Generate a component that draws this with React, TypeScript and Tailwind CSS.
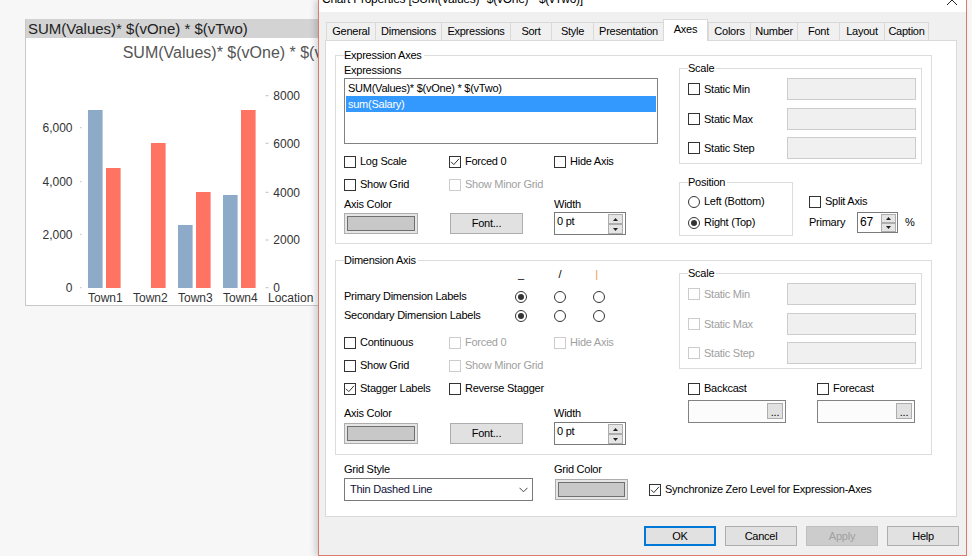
import React from "react";

const tabs = [
  { name: "General", w: "w-[49px]" },
  { name: "Dimensions", w: "w-[66px]" },
  { name: "Expressions", w: "w-[69px]" },
  { name: "Sort", w: "w-[41px]" },
  { name: "Style", w: "w-[42px]" },
  { name: "Presentation", w: "w-[70px]" },
  { name: "Axes", w: "w-[45px]", active: true },
  { name: "Colors", w: "w-[42px]" },
  { name: "Number", w: "w-[47px]" },
  { name: "Font", w: "w-[42px]" },
  { name: "Layout", w: "w-[45px]" },
  { name: "Caption", w: "w-[45px]", last: true },
];

function Box({ checked = false, disabled = false }: { checked?: boolean; disabled?: boolean }) {
  return (
    <span
      className={`w-[12px] h-[12px] shrink-0 border bg-white flex items-center justify-center ${
        disabled ? "border-[#cccccc]" : "border-[#333333]"
      }`}
    >
      {checked && (
        <svg width="10" height="10" viewBox="0 0 10 10">
          <path d="M1 4.8 L3.8 7.6 L9 1.8" fill="none" stroke="#333" strokeWidth="1" />
        </svg>
      )}
    </span>
  );
}

function Check({
  label,
  checked = false,
  disabled = false,
  className = "",
}: {
  label: string;
  checked?: boolean;
  disabled?: boolean;
  className?: string;
}) {
  return (
    <div className={`flex items-center h-[13px] ${className}`}>
      <Box checked={checked} disabled={disabled} />
      <span className={`ml-[4px] whitespace-nowrap ${disabled ? "text-[#a0a0a0]" : "text-black"}`}>{label}</span>
    </div>
  );
}

function Dot({ checked = false, className = "" }: { checked?: boolean; className?: string }) {
  return (
    <span
      className={`w-[12px] h-[12px] shrink-0 rounded-full border border-[#333333] bg-white flex items-center justify-center ${className}`}
    >
      {checked && <span className="w-[6px] h-[6px] rounded-full bg-[#333333]" />}
    </span>
  );
}

function Radio({ label, checked = false, className = "" }: { label: string; checked?: boolean; className?: string }) {
  return (
    <div className={`flex items-center h-[13px] ${className}`}>
      <Dot checked={checked} />
      <span className="ml-[4px] whitespace-nowrap">{label}</span>
    </div>
  );
}

function Group({ title, className = "", children }: { title: string; className?: string; children: React.ReactNode }) {
  return (
    <fieldset className={`border border-[#dcdcdc] ${className}`}>
      <legend className="pr-[2px] leading-[13px]">{title}</legend>
      {children}
    </fieldset>
  );
}

function Swatch({ className = "" }: { className?: string }) {
  return (
    <div className={`border border-[#adadad] bg-[#e5e5e5] p-[2px] ${className}`}>
      <div className="h-full border border-[#707070] bg-[#c8c8c8]" />
    </div>
  );
}

function Spinner() {
  return (
    <div className="flex flex-col mt-[1px] mr-[2px] ml-auto">
      <div className="w-[15px] h-[10px] border border-[#adadad] bg-[#e5e5e5] flex items-center justify-center">
        <svg width="5" height="3" viewBox="0 0 5 3">
          <path d="M0 3 L2.5 0 L5 3 Z" fill="#222" />
        </svg>
      </div>
      <div className="w-[15px] h-[10px] border border-[#adadad] bg-[#e5e5e5] flex items-center justify-center">
        <svg width="5" height="3" viewBox="0 0 5 3">
          <path d="M0 0 L2.5 3 L5 0 Z" fill="#222" />
        </svg>
      </div>
    </div>
  );
}

function WidthRow() {
  return (
    <div className="flex items-center h-[23px]">
      <Swatch className="w-[74px] h-[21px]" />
      <div className="ml-[32px] w-[73px] h-[21px] border border-[#adadad] bg-[#e1e1e1] flex items-center justify-center">
        Font...
      </div>
      <div className="ml-[31px] w-[72px] h-[23px] border border-[#7a7a7a] bg-white flex items-start">
        <span className="pl-[2px] pt-[2px]">0 pt</span>
        <Spinner />
      </div>
    </div>
  );
}

function ScaleGroup({ disabled = false }: { disabled?: boolean }) {
  return (
    <Group title="Scale" className="w-[243px] pl-[8px] pb-[4px]">
      <div className="mt-[3px] flex items-center h-[22px]">
        <Check label="Static Min" disabled={disabled} className="w-[99px]" />
        <div className="w-[129px] h-[22px] border border-[#cccccc] bg-[#f0f0f0]" />
      </div>
      <div className="mt-[8px] flex items-center h-[22px]">
        <Check label="Static Max" disabled={disabled} className="w-[99px]" />
        <div className="w-[129px] h-[22px] border border-[#cccccc] bg-[#f0f0f0]" />
      </div>
      <div className="mt-[7px] flex items-center h-[22px]">
        <Check label="Static Step" disabled={disabled} className="w-[99px]" />
        <div className="w-[129px] h-[22px] border border-[#cccccc] bg-[#f0f0f0]" />
      </div>
    </Group>
  );
}

function PickBox() {
  return (
    <div className="mt-[5px] w-[98px] h-[23px] border border-[#828282] bg-[#fcfcfc] flex justify-end">
      <div className="mt-[2px] mr-[2px] w-[16px] h-[16px] border border-[#adadad] bg-[#e1e1e1] flex items-end justify-center leading-[12px]">
        ...
      </div>
    </div>
  );
}

function Chart() {
  const bars = [
    { x: 88, top: 110, c: "#8eaac9" },
    { x: 106, top: 168, c: "#ff7362" },
    { x: 151, top: 143, c: "#ff7362" },
    { x: 178, top: 225, c: "#8eaac9" },
    { x: 196, top: 192, c: "#ff7362" },
    { x: 223, top: 195, c: "#8eaac9" },
    { x: 241, top: 110, c: "#ff7362" },
  ];
  const left = [
    { t: "6,000", y: 127.7 },
    { t: "4,000", y: 181.7 },
    { t: "2,000", y: 234.3 },
    { t: "0", y: 287.7 },
  ];
  const right = [
    { t: "8000", y: 95.7 },
    { t: "6000", y: 143.3 },
    { t: "4000", y: 192.3 },
    { t: "2000", y: 240 },
    { t: "0", y: 287.7 },
  ];
  const towns = [
    { t: "Town1", x: 88 },
    { t: "Town2", x: 133 },
    { t: "Town3", x: 178 },
    { t: "Town4", x: 223 },
    { t: "Location", x: 268 },
  ];
  const ff = "Liberation Sans, Arial, sans-serif";
  return (
    <svg width="300" height="267" viewBox="26 38 300 267" className="block">
      <text x="122.7" y="58.4" fontSize="16" fill="#555555" fontFamily={ff}>
        SUM(Values)* $(vOne) * $(vTwo)
      </text>
      {left.map((l) => (
        <g key={l.t}>
          <text x="72.5" y={l.y + 4.3} fontSize="12" fill="#333333" textAnchor="end" fontFamily={ff}>
            {l.t}
          </text>
          <rect x="80" y={l.y - 0.5} width="1.5" height="1" fill="#c0c0c0" />
        </g>
      ))}
      {right.map((r) => (
        <g key={r.t}>
          <rect x="265.5" y={r.y - 0.5} width="3" height="1" fill="#c0c0c0" />
          <text x="273.3" y={r.y + 4.3} fontSize="12" fill="#333333" fontFamily={ff}>
            {r.t}
          </text>
        </g>
      ))}
      {bars.map((b) => (
        <rect key={b.x} x={b.x} y={b.top} width="14.6" height={288 - b.top} fill={b.c} />
      ))}
      {towns.map((t) => (
        <text key={t.t} x={t.x} y="301.6" fontSize="12" fill="#333333" fontFamily={ff}>
          {t.t}
        </text>
      ))}
    </svg>
  );
}

export default function App() {
  return (
    <div className="w-[972px] h-[556px] flex overflow-hidden bg-[#f7f7f7] font-['Liberation_Sans',Arial,sans-serif]">
      <div className="w-[318px] h-full shrink-0 overflow-hidden pt-[19px] pl-[25px]">
        <div className="w-[300px] border-l border-b border-[#c8c8c8]">
          <div className="h-[19px] bg-[#d3d3d3] pl-[2px] text-[15px] leading-[19px] text-[#222222] whitespace-nowrap">
            SUM(Values)* $(vOne) * $(vTwo)
          </div>
          <div className="h-[267px] bg-white overflow-hidden">
            <Chart />
          </div>
        </div>
      </div>

      <div className="relative z-10 w-[649px] h-[556px] shrink-0 flex flex-col border-l border-r border-b border-[#dc7b6c] bg-[#f0f0f0] text-[11px] leading-[13px] tracking-[-0.25px] text-black shadow-[-3px_0_6px_rgba(0,0,0,0.16)]">
        <div className="h-[12px] bg-white overflow-hidden flex justify-between">
          <div className="pl-[3px] -mt-[7px] text-[12px] leading-[13px] whitespace-nowrap">
            Chart Properties [SUM(Values)* $(vOne) * $(vTwo)]
          </div>
          <svg width="12" height="12" viewBox="0 0 12 12" className="-mt-[6px] mr-[8px]">
            <path d="M1 1 L11 11 M11 1 L1 11" stroke="#222" strokeWidth="1" />
          </svg>
        </div>

        <div className="pt-[7px] pl-[6px]">
          <div className="flex items-end pl-[1px]">
            {tabs.map((t) =>
              t.active ? (
                <div
                  key={t.name}
                  className={`${t.w} h-[22px] -mb-px relative z-10 bg-white border-l border-r border-t border-[#d9d9d9] flex items-center justify-center pb-[2px]`}
                >
                  {t.name}
                </div>
              ) : (
                <div
                  key={t.name}
                  className={`${t.w} h-[18px] border-l border-t border-[#d9d9d9] flex items-center justify-center ${
                    t.last ? "border-r" : ""
                  }`}
                >
                  {t.name}
                </div>
              )
            )}
          </div>

          <div className="w-[632px] h-[477px] border border-[#d9d9d9] bg-white pl-[9px] pt-[8px]">
            <Group title="Expression Axes" className="w-[597px] pl-[8px] pb-[7px]">
              <div className="flex">
                <div className="w-[314px]">
                  <div className="mt-[2px]">Expressions</div>
                  <div className="mt-[1px] h-[66px] border border-[#828282] p-[1px]">
                    <div className="h-[16px] leading-[16px] pl-[2px]">SUM(Values)* $(vOne) * $(vTwo)</div>
                    <div className="h-[16px] leading-[16px] pl-[2px] bg-[#3399ff] text-white">sum(Salary)</div>
                  </div>
                  <div className="mt-[11px] flex">
                    <Check label="Log Scale" className="w-[105px]" />
                    <Check label="Forced 0" checked className="w-[105px]" />
                    <Check label="Hide Axis" />
                  </div>
                  <div className="mt-[10px] flex">
                    <Check label="Show Grid" className="w-[105px]" />
                    <Check label="Show Minor Grid" disabled />
                  </div>
                  <div className="mt-[7px] flex">
                    <span className="w-[210px]">Axis Color</span>
                    <span>Width</span>
                  </div>
                  <div className="mt-[1px]">
                    <WidthRow />
                  </div>
                </div>

                <div className="ml-[21px] w-[243px]">
                  <ScaleGroup />
                  <div className="mt-[12px] flex">
                    <Group title="Position" className="w-[114px] pl-[8px] pb-[6px]">
                      <Radio label="Left (Bottom)" className="mt-[6px]" />
                      <Radio label="Right (Top)" checked className="mt-[8px]" />
                    </Group>
                    <div className="ml-[16px]">
                      <Check label="Split Axis" className="mt-[19px]" />
                      <div className="mt-[4px] flex items-center h-[21px]">
                        <span className="w-[48px]">Primary</span>
                        <div className="w-[41px] h-[21px] border border-[#7a7a7a] bg-white flex items-start">
                          <span className="pl-[2px] pt-[3px] text-[12px]">67</span>
                          <div className="flex flex-col mt-[1px] mr-[1px] ml-auto">
                            <div className="w-[15px] h-[9px] border border-[#adadad] bg-[#e5e5e5] flex items-center justify-center">
                              <svg width="5" height="3" viewBox="0 0 5 3">
                                <path d="M0 3 L2.5 0 L5 3 Z" fill="#222" />
                              </svg>
                            </div>
                            <div className="w-[15px] h-[9px] border border-[#adadad] bg-[#e5e5e5] flex items-center justify-center">
                              <svg width="5" height="3" viewBox="0 0 5 3">
                                <path d="M0 0 L2.5 3 L5 0 Z" fill="#222" />
                              </svg>
                            </div>
                          </div>
                        </div>
                        <span className="ml-[7px]">%</span>
                      </div>
                    </div>
                  </div>
                </div>
              </div>
            </Group>

            <Group title="Dimension Axis" className="mt-[10px] w-[597px] pl-[8px] pb-[9px]">
              <div className="flex">
                <div className="w-[314px]">
                  <div className="mt-[1px] flex h-[13px]">
                    <span className="w-[171px]" />
                    <span className="w-[12px] text-center">_</span>
                    <span className="ml-[27px] w-[12px] text-center">/</span>
                    <span className="ml-[27px] w-[7px] text-center text-[#ee9b3c]">|</span>
                  </div>
                  <div className="mt-[9px] flex items-center h-[13px]">
                    <span className="w-[171px]">Primary Dimension Labels</span>
                    <Dot checked />
                    <Dot className="ml-[27px]" />
                    <Dot className="ml-[27px]" />
                  </div>
                  <div className="mt-[6px] flex items-center h-[13px]">
                    <span className="w-[171px]">Secondary Dimension Labels</span>
                    <Dot checked />
                    <Dot className="ml-[27px]" />
                    <Dot className="ml-[27px]" />
                  </div>
                  <div className="mt-[14px] flex">
                    <Check label="Continuous" className="w-[105px]" />
                    <Check label="Forced 0" disabled className="w-[105px]" />
                    <Check label="Hide Axis" disabled />
                  </div>
                  <div className="mt-[10px] flex">
                    <Check label="Show Grid" className="w-[105px]" />
                    <Check label="Show Minor Grid" disabled />
                  </div>
                  <div className="mt-[10px] flex">
                    <Check label="Stagger Labels" checked className="w-[105px]" />
                    <Check label="Reverse Stagger" />
                  </div>
                  <div className="mt-[12px] flex">
                    <span className="w-[210px]">Axis Color</span>
                    <span>Width</span>
                  </div>
                  <div className="mt-[2px]">
                    <WidthRow />
                  </div>
                </div>

                <div className="ml-[21px] w-[243px]">
                  <ScaleGroup disabled />
                  <div className="mt-[13px] pl-[9px] flex">
                    <div className="w-[129px]">
                      <Check label="Backcast" />
                      <PickBox />
                    </div>
                    <div>
                      <Check label="Forecast" />
                      <PickBox />
                    </div>
                  </div>
                </div>
              </div>
            </Group>

            <div className="mt-[8px] pl-[9px] flex">
              <div className="w-[189px]">
                <div>Grid Style</div>
                <div className="mt-[2px] h-[23px] border border-[#7a7a7a] bg-white flex items-center pl-[5px] pr-[4px] text-[#10103a]">
                  <span>Thin Dashed Line</span>
                  <svg width="9" height="6" viewBox="0 0 9 6" className="ml-auto">
                    <path d="M0.5 0.8 L4.5 4.8 L8.5 0.8" fill="none" stroke="#444" strokeWidth="1" />
                  </svg>
                </div>
              </div>
              <div className="ml-[21px] w-[74px]">
                <div>Grid Color</div>
                <Swatch className="mt-[3px] ml-[1px] w-[73px] h-[21px]" />
              </div>
              <div className="ml-[21px] mt-[20px]">
                <Check label="Synchronize Zero Level for Expression-Axes" checked />
              </div>
            </div>
          </div>

          <div className="mt-[9px] pr-[7px] flex justify-end gap-[9px]">
            <div className="w-[72px] h-[20px] border-2 border-[#0078d7] bg-[#e1e1e1] flex items-center justify-center">OK</div>
            <div className="w-[72px] h-[20px] border border-[#adadad] bg-[#e1e1e1] flex items-center justify-center">Cancel</div>
            <div className="w-[72px] h-[20px] border border-[#bfbfbf] bg-[#cccccc] text-[#a0a0a0] flex items-center justify-center">
              Apply
            </div>
            <div className="w-[72px] h-[20px] border border-[#adadad] bg-[#e1e1e1] flex items-center justify-center">Help</div>
          </div>
        </div>
      </div>
    </div>
  );
}
